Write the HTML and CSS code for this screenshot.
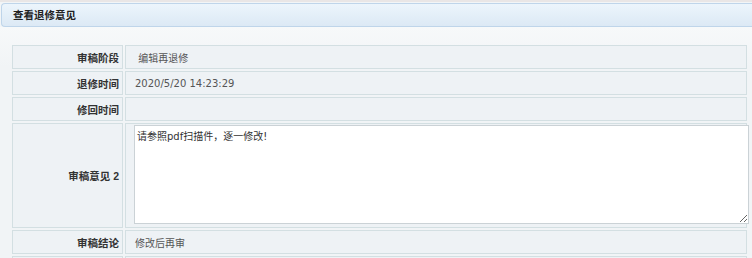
FILE: index.html
```html
<!DOCTYPE html>
<html lang="zh-CN">
<head>
	<meta charset="UTF-8">
	<title>查看退修意见</title>
	<link rel="stylesheet" href="styles.css">
</head>
<body>

	<div class="panel">
		<!-- title bar -->
		<div class="panel-head">查看退修意见</div>

		<div class="panel-body">
			<table class="infotable">
				<colgroup>
					<col class="col-label">
					<col>
				</colgroup>
				<tr>
					<td class="label">审稿阶段</td>
					<td class="value">&nbsp;编辑再退修</td>
				</tr>
				<tr>
					<td class="label">退修时间</td>
					<td class="value">2020/5/20 14:23:29</td>
				</tr>
				<tr>
					<td class="label">修回时间</td>
					<td class="value"></td>
				</tr>
				<tr class="bigrow">
					<td class="label">审稿意见 2</td>
					<td class="value areacell"><textarea class="opinion">请参照pdf扫描件，逐一修改!</textarea></td>
				</tr>
				<tr>
					<td class="label">审稿结论</td>
					<td class="value">修改后再审</td>
				</tr>
				<tr>
					<td class="label"></td>
					<td class="value"></td>
				</tr>
			</table>
		</div>
	</div>

</body>
</html>
```

FILE: styles.css
```css
:root{
	--cellbg: #eef2f5;
	--cellborder: #d3dfe2;
	--headborder: #bfd5ea;
	--valuefont: "DejaVu Sans", "Noto Sans CJK SC", Verdana, sans-serif;
}
*{
	box-sizing: border-box;
}
body {
	font-family: "Liberation Sans", "Noto Sans CJK SC", Arial, sans-serif;
	font-size: 10.5px;
	margin: 0;
	background-color: #f2f5f7;
	border-top: 2px solid #e9e6e6;
}

.panel-head {
	margin: 1px 0 0 1px;
	height: 24px;
	line-height: 22px;
	padding-left: 11px;
	font-weight: bold;
	color: #222;
	border: 1px solid var(--headborder);
	border-right: none;
	border-radius: 4px 0 0 4px;
	background: linear-gradient(#ecf5fc, #dce9f5);
}

.panel-body {
	padding: 16px 3px 0 10px;
	background: linear-gradient(#f7f9fa, #f1f4f6 40px);
}

.infotable {
	width: 100%;
	table-layout: fixed;
	border-collapse: separate;
	border-spacing: 2px;
}
.infotable .col-label {
	width: 111px;
}
.infotable td {
	height: 24px;
	padding: 0;
	border: 1px solid var(--cellborder);
	background-color: var(--cellbg);
	vertical-align: middle;
}
.infotable td.label {
	text-align: right;
	padding-right: 3px;
	font-weight: bold;
	color: #333;
}
.infotable td.value {
	padding-left: 9px;
	font-family: var(--valuefont);
	font-size: 10px;
	color: #555;
}

.bigrow td {
	height: 105px;
}
.infotable td.areacell {
	padding: 1px 0 3px 8px;
	overflow: visible;
}
.opinion {
	display: block;
	width: 615px;
	height: 99px;
	margin: 0;
	padding: 2px 2px;
	font-family: var(--valuefont);
	font-size: 10px;
	color: #333;
	border: 1px solid #cbd2d6;
	background-color: white;
}
```
